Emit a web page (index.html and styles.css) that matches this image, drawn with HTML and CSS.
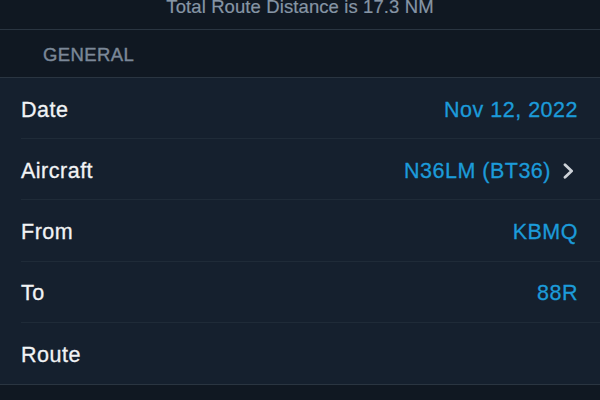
FILE: index.html
```html
<!DOCTYPE html>
<html>
<head>
<meta charset="utf-8">
<link rel="stylesheet" href="styles.css">
</head>
<body>
<div class="summary"><span class="summary-text">Total Route Distance is 17.3 NM</span></div>
<div class="section-header">GENERAL</div>
<div class="group">
  <div class="row"><span class="label">Date</span><span class="value">Nov 12, 2022</span></div>
  <div class="row"><span class="label">Aircraft</span><span class="value">N36LM (BT36)<svg class="chev" width="11" height="16" viewBox="0 0 11 16"><path d="M2 1.8 L8.6 8 L2 14.2" fill="none" stroke="#cdd2d8" stroke-width="2.8" stroke-linecap="round" stroke-linejoin="round"/></svg></span></div>
  <div class="row"><span class="label">From</span><span class="value">KBMQ</span></div>
  <div class="row"><span class="label">To</span><span class="value">88R</span></div>
  <div class="row last"><span class="label">Route</span><span class="value"></span></div>
</div>
</body>
</html>
```

FILE: styles.css
```css
html, body {
  margin: 0;
  padding: 0;
  background: #101822;
  font-family: "Liberation Sans", Arial, sans-serif;
  width: 600px;
  height: 400px;
  overflow: hidden;
}
.summary {
  height: 29px;
  border-bottom: 1px solid #2a3541;
  display: flex;
  justify-content: center;
  align-items: flex-end;
  overflow: hidden;
}
.summary-text {
  color: #8695a5;
  font-size: 18.5px;
  line-height: 20px;
  margin-bottom: 12px;
  letter-spacing: 0.1px;
  -webkit-text-stroke: 0.2px #8695a5;
}
.section-header {
  height: 47px;
  box-sizing: border-box;
  display: flex;
  align-items: center;
  padding-left: 43px;
  padding-top: 2px;
  color: #7b8898;
  font-size: 18.5px;
  letter-spacing: 0.4px;
  -webkit-text-stroke: 0.4px #7b8898;
}
.group {
  background: #15202e;
  border-top: 1px solid #2a3541;
  border-bottom: 1px solid #2a3541;
  padding-left: 21px;
}
.row {
  height: 61.2px;
  box-sizing: border-box;
  display: flex;
  align-items: center;
  justify-content: space-between;
  padding-right: 22px;
  padding-top: 4px;
  border-bottom: 1px solid #1f2b38;
  font-size: 21.5px;
  letter-spacing: 0.5px;
}
.row.last {
  border-bottom: none;
}
.label {
  color: #f1f3f5;
  -webkit-text-stroke: 0.3px #f1f3f5;
}
.value {
  color: #1c9bd9;
  -webkit-text-stroke: 0.3px #1c9bd9;
  display: flex;
  align-items: center;
}
.chev {
  margin-left: 12px;
  margin-right: 4px;
}
```
